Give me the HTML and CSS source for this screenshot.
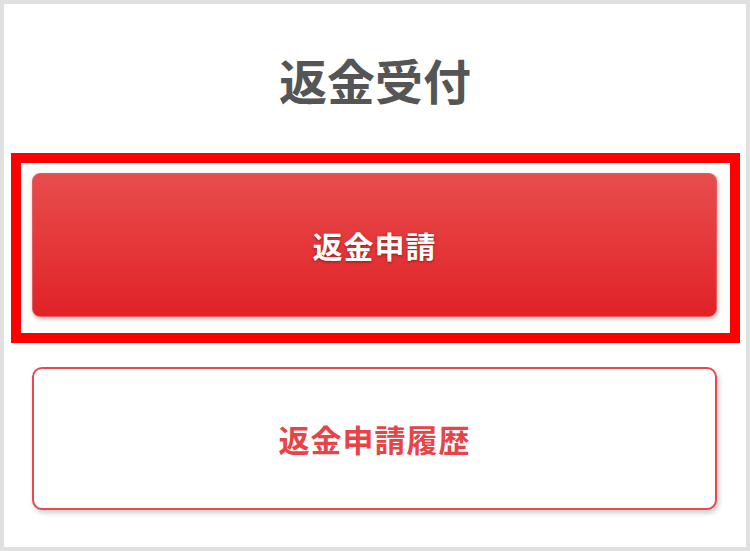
FILE: index.html
```html
<!DOCTYPE html>
<html lang="ja">
<head>
<meta charset="utf-8">
<title>返金受付</title>
<link rel="stylesheet" href="styles.css">
</head>
<body>
<div class="frame">
  <h1 class="title">返金受付</h1>
  <div class="highlight">
    <a class="btn btn-primary" href="#">返金申請</a>
  </div>
  <a class="btn btn-outline" href="#">返金申請履歴</a>
</div>
</body>
</html>
```
FILE: styles.css
```css
html, body {
  margin: 0;
  padding: 0;
  background: #ffffff;
}
.frame {
  box-sizing: border-box;
  width: 750px;
  height: 551px;
  border: 4px solid #e0e0e0;
  background: #ffffff;
  font-family: "Noto Sans CJK JP", "Noto Sans", sans-serif;
  display: flex;
  flex-direction: column;
}
.title {
  margin: 0;
  height: 149px;
  display: flex;
  align-items: center;
  justify-content: center;
  font-size: 48px;
  font-weight: 700;
  color: #555555;
  letter-spacing: 0;
}
.highlight {
  margin: 0 6px 0 7px;
  border: 10px solid #ff0000;
  padding: 10px 13px 16px 11px;
}
.btn {
  box-sizing: border-box;
  display: flex;
  align-items: center;
  justify-content: center;
  text-decoration: none;
  font-weight: 700;
  width: 685px;
}
.btn-primary {
  height: 144px;
  border-radius: 8px;
  background: linear-gradient(#e74d4d, #e12227);
  border: 1px solid #e65c5c;
  color: #ffffff;
  font-size: 30px;
  text-shadow: 0 1px 3px rgba(90, 0, 0, 0.55);
  box-shadow: 1px 2px 4px rgba(0, 0, 0, 0.28);
  letter-spacing: 1px;
}
.btn-outline {
  margin: 24px 0 0 28px;
  height: 143px;
  border-radius: 10px;
  border: 2px solid #e8494d;
  background: #ffffff;
  color: #e84448;
  font-size: 31px;
  box-shadow: 2px 3px 5px rgba(0, 0, 0, 0.2);
  letter-spacing: 1px;
}
```
